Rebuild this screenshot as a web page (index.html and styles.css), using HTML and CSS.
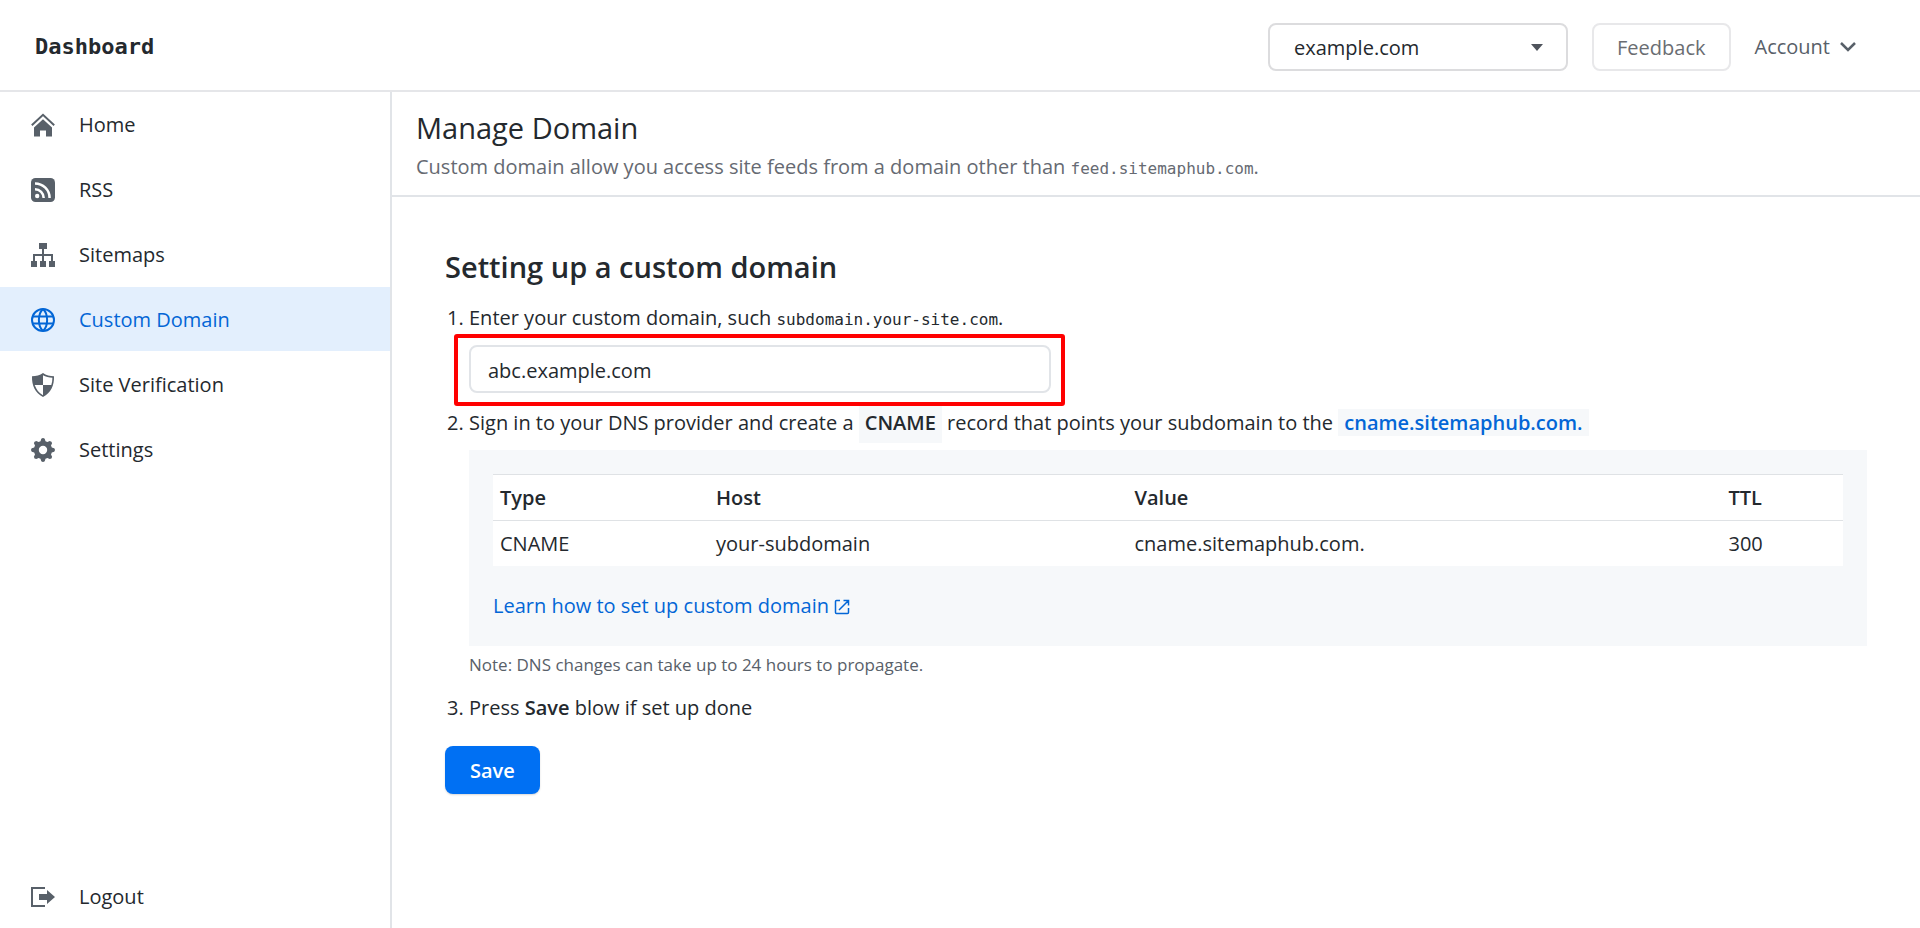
FILE: index.html
```html
<!DOCTYPE html>
<html lang="en">
<head>
<meta charset="utf-8">
<meta name="viewport" content="width=device-width, initial-scale=1">
<title>Manage Domain</title>
<link rel="stylesheet" href="styles.css">
</head>
<body>
<div class="app">
  <header class="topbar">
    <a class="brand" href="#">Dashboard</a>
    <div class="topbar-actions">
      <div class="site-picker">
        <select class="site-select" aria-label="Site">
          <option>example.com</option>
        </select>
        <svg class="site-caret" viewBox="0 0 12 7" aria-hidden="true"><path d="M0 0h12L6 7z"/></svg>
      </div>
      <button class="btn btn-outline" type="button">Feedback</button>
      <button class="account" type="button">Account
        <svg class="account-caret" viewBox="0 0 16 10" aria-hidden="true"><path d="M1 1l7 7 7-7"/></svg>
      </button>
    </div>
  </header>
  <div class="body">
    <nav class="sidebar" aria-label="Main">
      <a class="nav-item" href="#">
        <svg class="icon" viewBox="0 0 24 24" aria-hidden="true"><path d="M12 6.2L21 14.500V23.500H15V17.500H9V23.500H3V14.500z"/><path class="line" d="M.8 12.200L12 1.800l11.200 10.400" stroke-width="2"/></svg>
        <span>Home</span>
      </a>
      <a class="nav-item" href="#">
        <svg class="icon" viewBox="0 0 24 24" aria-hidden="true"><rect width="24" height="24" rx="4.500"/><circle class="cut-fill" cx="6.200" cy="18" r="2.200"/><path class="cut" d="M4 11.300a8.700 8.700 0 0 1 8.700 8.700M4 5.400A14.600 14.600 0 0 1 18.600 20"/></svg>
        <span>RSS</span>
      </a>
      <a class="nav-item" href="#">
        <svg class="icon" viewBox="0 0 24 24" aria-hidden="true"><path d="M8 0h8v6h-3v5h9v7h2v6h-6v-6h2v-5h-7v5h2v6H9v-6h2v-5H4v5h2v6H0v-6h2v-7h9V6H8z"/></svg>
        <span>Sitemaps</span>
      </a>
      <a class="nav-item nav-item-active" href="#" aria-current="page">
        <svg class="icon" viewBox="0 0 24 24" aria-hidden="true"><g class="line" stroke-width="2"><circle cx="12" cy="12" r="11"/><path d="M1.500 8.500h21M1.500 15.500h21M12 1C6.500 6 6.500 18 12 23M12 1c5.500 5 5.500 17 0 22"/></g></svg>
        <span>Custom Domain</span>
      </a>
      <a class="nav-item" href="#">
        <svg class="icon" viewBox="0 0 24 24" aria-hidden="true"><path fill-rule="evenodd" d="M12 0c3 2.200 7 3.200 11 3.200C23.300 12 20 20 12 24 4 20 .7 12 1 3.200 5 3.200 9 2.200 12 0zM12 2.200V12h8.300c.8-2.300 1.100-4.700 1.100-7.200C18 4.600 14.600 3.800 12 2.200zM12 12H3.700c1.500 4.300 4.200 8 8.300 10.200z"/></svg>
        <span>Site Verification</span>
      </a>
      <a class="nav-item" href="#">
        <svg class="icon" viewBox="0 0 24 24" aria-hidden="true"><path fill-rule="evenodd" d="M10.300.8Q12-.7 13.700.8L14.500 3.200 16.400 4 18.700 2.900Q21 3 21.100 5.300L20 7.600l.8 1.900 2.400.8Q24.700 12 23.200 13.700l-2.400.8-.8 1.900 1.100 2.300Q21 21 18.700 21.100L16.400 20l-1.900.8-.8 2.400Q12 24.700 10.300 23.200L9.500 20.800 7.600 20l-2.300 1.100Q3 21 2.900 18.700L4 16.400l-.8-1.900L.8 13.700Q-.7 12 .8 10.300L3.200 9.500 4 7.600 2.900 5.300Q3 3 5.300 2.900L7.600 4l1.900-.8zM12 7.800a4.200 4.200 0 1 0 0 8.400 4.200 4.200 0 0 0 0-8.400z"/></svg>
        <span>Settings</span>
      </a>
      <a class="nav-item nav-item-last" href="#">
        <svg class="icon" viewBox="0 0 24 24" aria-hidden="true"><path d="M0 2h14v2H2v16h12v2H0z"/><path d="M8 9h8V5l8 7-8 7v-4H8z"/></svg>
        <span>Logout</span>
      </a>
    </nav>
    <main class="main">
      <div class="page-head">
        <h1 class="page-title">Manage Domain</h1>
        <p class="page-lead">Custom domain allow you access site feeds from a domain other than <code class="code">feed.sitemaphub.com</code>.</p>
      </div>
      <form class="setup">
        <h2 class="setup-title">Setting up a custom domain</h2>
        <ol class="steps">
          <li class="step">
            <label for="domain">Enter your custom domain, such <code class="code">subdomain.your-site.com</code>.</label>
            <div class="domain-field">
              <input class="domain-input" id="domain" type="text" value="abc.example.com">
            </div>
          </li>
          <li class="step step-dns">Sign in to your DNS provider and create a <span class="tag tag-tall">CNAME</span> record that points your subdomain to the <a class="tag tag-link" href="#">cname.sitemaphub.com.</a>
            <div class="panel">
              <table class="records">
                <thead>
                  <tr><th class="col-type" scope="col">Type</th><th class="col-host" scope="col">Host</th><th class="col-value" scope="col">Value</th><th class="col-ttl" scope="col">TTL</th></tr>
                </thead>
                <tbody>
                  <tr><td>CNAME</td><td>your-subdomain</td><td>cname.sitemaphub.com.</td><td>300</td></tr>
                </tbody>
              </table>
              <a class="help-link" href="#">Learn how to set up custom domain
                <svg class="help-icon" viewBox="0 0 16 16" aria-hidden="true"><path d="M6 1.500H2.500q-1 0-1 1v11q0 1 1 1h11q1 0 1-1V9M9.500 1.500h5v5M14.500 1.500L5 11"/></svg>
              </a>
            </div>
            <p class="note">Note: DNS changes can take up to 24 hours to propagate.</p>
          </li>
          <li class="step">Press <strong class="strong">Save</strong> blow if set up done</li>
        </ol>
        <button class="btn btn-primary" type="button">Save</button>
      </form>
    </main>
  </div>
</div>
</body>
</html>
```
FILE: styles.css
```css
* {
  box-sizing: border-box;
}

body {
  margin: 0;
  background: #fff;
  color: #24292e;
  font-family: "Open Sans", "Noto Sans", sans-serif;
  font-size: 20px;
  line-height: 32px;
}

a {
  color: #0366d6;
  text-decoration: none;
}

h1, h2, p, ol {
  margin: 0;
}

button, input, select {
  font: inherit;
  color: inherit;
}

.app {
  display: flex;
  flex-direction: column;
  min-height: 100vh;
}

/* Top bar */
.topbar {
  display: flex;
  align-items: center;
  justify-content: space-between;
  padding: 23px 64px 19px 35px;
  border-bottom: 2px solid #e5e6e9;
}

.brand {
  color: #24292e;
  font-family: "DejaVu Sans Mono", monospace;
  font-size: 22px;
  font-weight: 700;
}

.topbar-actions {
  display: flex;
  align-items: center;
  gap: 24px;
}

.site-picker {
  position: relative;
}

.site-select {
  display: block;
  width: 300px;
  height: 48px;
  padding: 2px 24px 0;
  appearance: none;
  background: #fff;
  border: 2px solid #dcdcde;
  border-radius: 8px;
}

.site-caret {
  position: absolute;
  top: 21px;
  right: 25px;
  width: 12px;
  height: 7px;
  fill: #4f545c;
  pointer-events: none;
}

.btn {
  height: 48px;
  padding: 2px 23px 0;
  border: 2px solid transparent;
  border-radius: 8px;
}

.btn-outline {
  background: #fff;
  border-color: #e8e8ea;
  color: #6a6d72;
}

.btn-primary {
  margin-top: 22px;
  background: #0070f3;
  box-shadow: 0 1px 2px rgba(0, 0, 0, 0.16);
  color: #fff;
  font-weight: 600;
}

.account {
  display: flex;
  align-items: center;
  gap: 10px;
  padding: 0;
  background: none;
  border: 0;
  color: #586069;
}

.account-caret {
  width: 16px;
  height: 10px;
  fill: none;
  stroke: #586069;
  stroke-width: 2.5px;
}

/* Sidebar */
.body {
  display: flex;
  flex: 1;
}

.sidebar {
  display: flex;
  flex: 0 0 392px;
  flex-direction: column;
  gap: 1px;
  border-right: 2px solid #e1e4e8;
}

.nav-item {
  display: flex;
  align-items: center;
  gap: 24px;
  height: 64px;
  padding-top: 2px;
  padding-left: 31px;
  color: #24292e;
}

.nav-item-active {
  background: #e3effd;
  color: #0366d6;
}

.nav-item-last {
  margin-top: auto;
}

.icon {
  width: 24px;
  height: 24px;
  fill: #586069;
  stroke: #586069;
  stroke-width: 0;
}

.nav-item-active .icon {
  stroke: #0366d6;
}

.icon .line {
  fill: none;
}

.icon .cut {
  fill: none;
  stroke: #fff;
  stroke-width: 2.5px;
}

.icon .cut-fill {
  fill: #fff;
}

/* Page */
.main {
  flex: 1;
  min-width: 0;
}

.page-head {
  padding: 16px 24px 10px;
  border-bottom: 2px solid #e1e4e8;
}

.page-title {
  font-size: 29px;
  font-weight: 400;
  line-height: 40px;
}

.page-lead {
  padding-top: 3px;
  color: #666a72;
}

.code {
  font-family: "DejaVu Sans Mono", monospace;
  font-size: 16px;
}

.setup {
  padding: 50px 53px 40px;
}

.setup-title {
  font-size: 29px;
  font-weight: 600;
  line-height: 40px;
}

.steps {
  padding: 15px 0 0 24px;
}

.domain-field {
  position: relative;
  width: 582px;
  margin: 9px 0 10px;
}

.domain-field::after {
  content: "";
  position: absolute;
  inset: -11px -14px -13px -15px;
  border: 4px solid #f00;
  border-radius: 3px;
  pointer-events: none;
}

.domain-input {
  display: block;
  width: 100%;
  height: 48px;
  padding: 2px 17px 0;
  background: #fff;
  border: 2px solid #e1e4e8;
  border-radius: 8px;
}

.step-dns {
  line-height: 40px;
}

.tag {
  padding: 0 6px;
  background: #f6f8fa;
  font-weight: 600;
}

.tag-tall {
  display: inline-block;
}

.panel {
  margin-top: 7px;
  padding: 24px;
  background: #f6f8fa;
  line-height: 32px;
}

.records {
  width: 100%;
  margin-bottom: 24px;
  background: #fff;
  border-collapse: collapse;
  table-layout: fixed;
}

.records th,
.records td {
  padding: 7px 7px 6px;
  border-top: 1px solid #dfe2e5;
  text-align: left;
}

.records th {
  font-weight: 600;
}

.col-type {
  width: 16%;
}

.col-host {
  width: 31%;
}

.col-value {
  width: 44%;
}

.col-ttl {
  width: 9%;
}

.help-icon {
  width: 16px;
  height: 16px;
  fill: none;
  stroke: #0366d6;
  stroke-width: 1.5px;
  vertical-align: -2px;
}

.note {
  padding: 3px 0 11px;
  color: #586069;
  font-size: 17px;
  line-height: 32px;
}

.strong {
  font-weight: 600;
}
```
